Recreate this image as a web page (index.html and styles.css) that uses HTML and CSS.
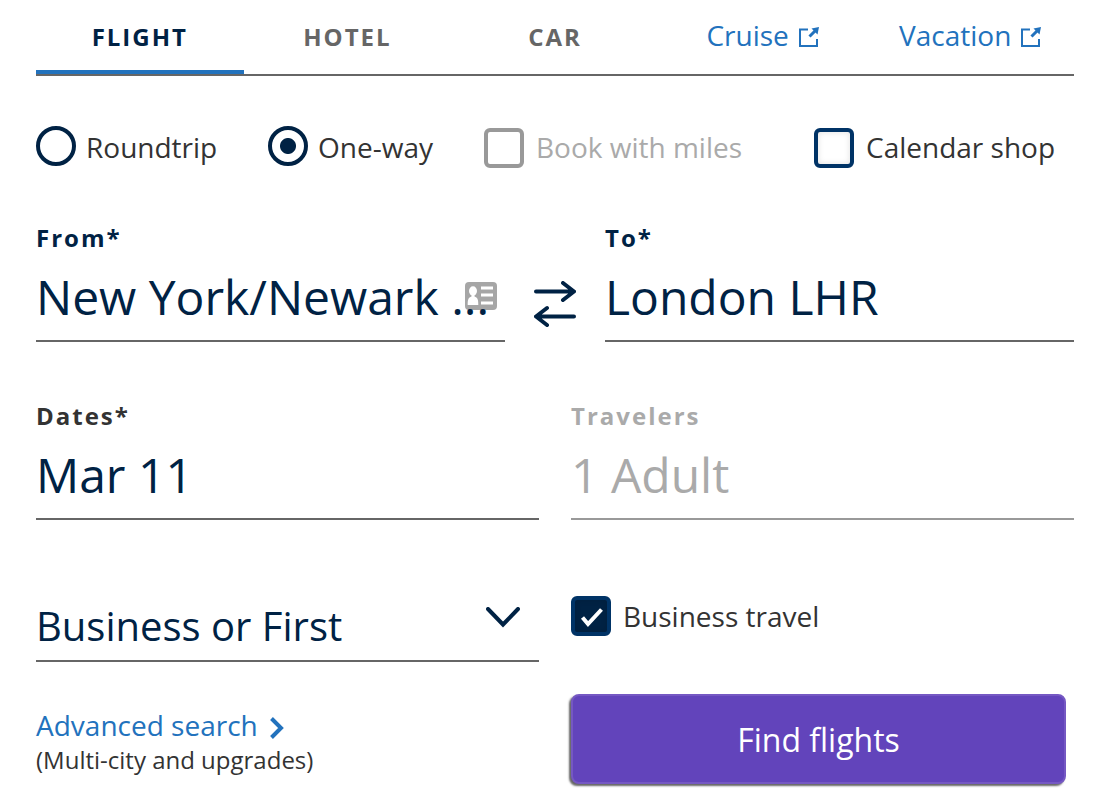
FILE: index.html
```html
<!DOCTYPE html>
<html lang="en">
<head>
    <meta charset="UTF-8">
    <meta name="viewport" content="width=device-width, initial-scale=1.0">
    <title>Book travel</title>
    <link rel="stylesheet" href="styles.css">
</head>
<body>
    <main class="booking">
        <nav class="tabs">
            <button type="button" class="tab active">FLIGHT</button>
            <button type="button" class="tab">HOTEL</button>
            <button type="button" class="tab">CAR</button>
            <a href="#" class="tab-link">Cruise
                <svg width="20" height="20" viewBox="0 0 20 20" aria-hidden="true">
                    <path class="line" d="M9 2.5H1V19H18V12"></path>
                    <path class="shaft" d="M10.5 9.5L16 4"></path>
                    <path class="head" d="M20 0L12.5 1.5L18.5 7.5Z"></path>
                </svg>
            </a>
            <a href="#" class="tab-link">Vacation
                <svg width="20" height="20" viewBox="0 0 20 20" aria-hidden="true">
                    <path class="line" d="M9 2.5H1V19H18V12"></path>
                    <path class="shaft" d="M10.5 9.5L16 4"></path>
                    <path class="head" d="M20 0L12.5 1.5L18.5 7.5Z"></path>
                </svg>
            </a>
        </nav>

        <form class="search-form">
            <div class="options">
                <label class="option radio-option"><input type="radio" name="trip" class="radio">Roundtrip</label>
                <label class="option radio-option"><input type="radio" name="trip" class="radio" checked>One-way</label>
                <label class="option disabled"><input type="checkbox" class="checkbox" disabled>Book with miles</label>
                <label class="option"><input type="checkbox" class="checkbox">Calendar shop</label>
            </div>

            <div class="route">
                <div class="field">
                    <label for="from">From*</label>
                    <input type="text" id="from" value="New York/Newark ...">
                    <svg class="card-icon" width="32" height="28" viewBox="0 0 32 28" aria-hidden="true">
                        <rect width="32" height="28" rx="4" fill="#a6a6a6"></rect>
                        <ellipse cx="8" cy="9" rx="4" ry="4.7" fill="#fff"></ellipse>
                        <path d="M2.7 23C2.7 17 3.5 15.5 6.5 14.5V12H9.5V14.5C12.5 15.5 13.3 17 13.3 23Z" fill="#fff"></path>
                        <path d="M16 6H28M16 13H28M16 21H28" stroke="#fff" stroke-width="3"></path>
                    </svg>
                </div>
                <button type="button" class="swap" aria-label="Swap">
                    <svg width="42" height="46" viewBox="0 0 42 46" aria-hidden="true">
                        <path d="M2 10.5H40M29 2L40 10.5L29 19M40 35.5H2M13 27L2 35.5L13 44"></path>
                    </svg>
                </button>
                <div class="field">
                    <label for="to">To*</label>
                    <input type="text" id="to" value="London LHR">
                </div>
            </div>

            <div class="row dates">
                <div class="field">
                    <label for="dates" class="dark">Dates*</label>
                    <input type="text" id="dates" value="Mar 11">
                </div>
                <div class="field disabled">
                    <label for="travelers">Travelers</label>
                    <input type="text" id="travelers" value="1 Adult" disabled>
                </div>
            </div>

            <div class="row cabin-row">
                <div class="cabin">
                    <select aria-label="Cabin">
                        <option>Business or First</option>
                    </select>
                    <svg class="chevron" width="34" height="21" viewBox="0 0 34 21" aria-hidden="true">
                        <path d="M2 2L17 17.5L32 2"></path>
                    </svg>
                </div>
                <label class="option"><input type="checkbox" class="checkbox" checked>Business travel</label>
            </div>

            <div class="row actions">
                <div class="advanced">
                    <a href="#">Advanced search
                        <svg width="15" height="22" viewBox="0 0 15 22" aria-hidden="true">
                            <path d="M1.5 1.5L11 11L1.5 20.5"></path>
                        </svg>
                    </a>
                    <p>(Multi-city and upgrades)</p>
                </div>
                <button type="submit" class="find-btn">Find flights</button>
            </div>
        </form>
    </main>
</body>
</html>
```

FILE: styles.css
```css
* {
    box-sizing: border-box;
}

body {
    margin: 0;
    background: #fff;
    color: #333;
    font-family: 'Open Sans', 'Noto Sans', sans-serif;
    font-size: 28px;
}

button, input, select {
    font-family: inherit;
    margin: 0;
    padding: 0;
    border: 0;
    border-radius: 0;
    background: transparent;
}

a {
    color: #2272bd;
    text-decoration: none;
}

.booking {
    padding: 0 26px 20px 36px;
}

/* Tabs */
.tabs {
    display: grid;
    grid-template-columns: repeat(5, 1fr);
    align-items: end;
    height: 76px;
    border-bottom: 2px solid #666;
}

.tab {
    padding-bottom: 17px;
    border-bottom: 4px solid transparent;
    color: #666;
    font-size: 24px;
    font-weight: bold;
    line-height: 32px;
    letter-spacing: 2px;
}

.tab.active {
    color: #024;
    border-bottom-color: #2272bd;
}

.tab-link {
    display: flex;
    justify-content: center;
    align-items: center;
    gap: 10px;
    padding-bottom: 20px;
    line-height: 38px;
}

.tab-link svg {
    margin-top: 4px;
}

.tab-link .line {
    fill: none;
    stroke: #2272bd;
    stroke-width: 2;
}

.tab-link .shaft {
    stroke: #2272bd;
    stroke-width: 3;
}

.tab-link .head {
    fill: #2272bd;
}

/* Radios and checkboxes */
.options {
    display: grid;
    grid-template-columns: 232fr 216fr 330fr 260fr;
    margin-top: 50px;
}

.option {
    display: flex;
    align-items: flex-end;
    gap: 12px;
    line-height: 42px;
    white-space: nowrap;
}

.radio-option {
    align-items: flex-start;
    gap: 10px;
}

.option.disabled {
    color: #aaa;
}

.radio, .checkbox {
    appearance: none;
    flex: none;
    width: 40px;
    height: 40px;
    border: 4px solid #024;
}

.radio {
    border-radius: 50%;
}

.radio:checked {
    background: radial-gradient(circle, #024 7.5px, transparent 8.5px);
}

.checkbox {
    border-color: #036;
    border-radius: 6px;
    box-shadow: inset 0 0 6px rgba(0, 0, 0, 0.12);
}

.checkbox:disabled {
    border-color: #999;
    box-shadow: none;
}

.checkbox:checked {
    background: #024 url("data:image/svg+xml,%3Csvg xmlns='http://www.w3.org/2000/svg' viewBox='0 0 32 32'%3E%3Cpath d='M7.5 17.5L13 24L26.5 9.5' fill='none' stroke='white' stroke-width='4'/%3E%3C/svg%3E") center / 32px no-repeat;
}

/* Fields */
.route {
    display: grid;
    grid-template-columns: 1fr 100px 1fr;
    margin-top: 54px;
}

.row {
    display: grid;
    grid-template-columns: 1fr 1fr;
    gap: 32px;
}

.field {
    position: relative;
    display: flex;
    flex-direction: column;
    gap: 10px;
    padding-bottom: 12px;
    border-bottom: 2px solid #666;
}

.field label {
    color: #024;
    font-size: 24px;
    font-weight: bold;
    line-height: 32px;
    letter-spacing: 2px;
}

.field label.dark {
    color: #333;
}

.field input {
    position: relative;
    z-index: 1;
    width: 100%;
    height: 64px;
    color: #024;
    font-size: 48px;
}

.field.disabled {
    border-bottom-color: #999;
}

.field.disabled label,
.field.disabled input {
    color: #aaa;
}

.card-icon {
    position: absolute;
    top: 60px;
    right: 8px;
}

.swap {
    align-self: center;
    justify-self: center;
    padding-top: 44px;
}

.swap svg {
    display: block;
    fill: none;
    stroke: #024;
    stroke-width: 4;
    stroke-linecap: round;
    stroke-linejoin: round;
}

.dates {
    margin-top: 58px;
}

/* Cabin */
.cabin-row {
    margin-top: 76px;
    align-items: start;
}

.cabin-row .option {
    line-height: 40px;
}

.cabin {
    position: relative;
    padding: 2px 0 8px;
    border-bottom: 2px solid #666;
}

.cabin select {
    appearance: none;
    display: block;
    width: 100%;
    height: 54px;
    color: #024;
    font-size: 40px;
}

.chevron {
    position: absolute;
    top: 11px;
    right: 19px;
    fill: none;
    stroke: #024;
    stroke-width: 4;
    stroke-linecap: round;
    pointer-events: none;
}

/* Bottom row */
.actions {
    margin-top: 32px;
}

.advanced {
    padding-top: 12px;
}

.advanced a {
    display: flex;
    align-items: center;
    gap: 12px;
    line-height: 38px;
}

.advanced svg {
    margin-top: 6px;
    fill: none;
    stroke: #2272bd;
    stroke-width: 4;
}

.advanced p {
    margin: 0;
    font-size: 24px;
    line-height: 32px;
}

.find-btn {
    height: 90px;
    margin-right: 8px;
    border: 2px solid #7558c3;
    border-radius: 8px;
    background: #6244bb;
    box-shadow: -2px 2px 2px #666;
    color: #fff;
    font-size: 32px;
}
```
